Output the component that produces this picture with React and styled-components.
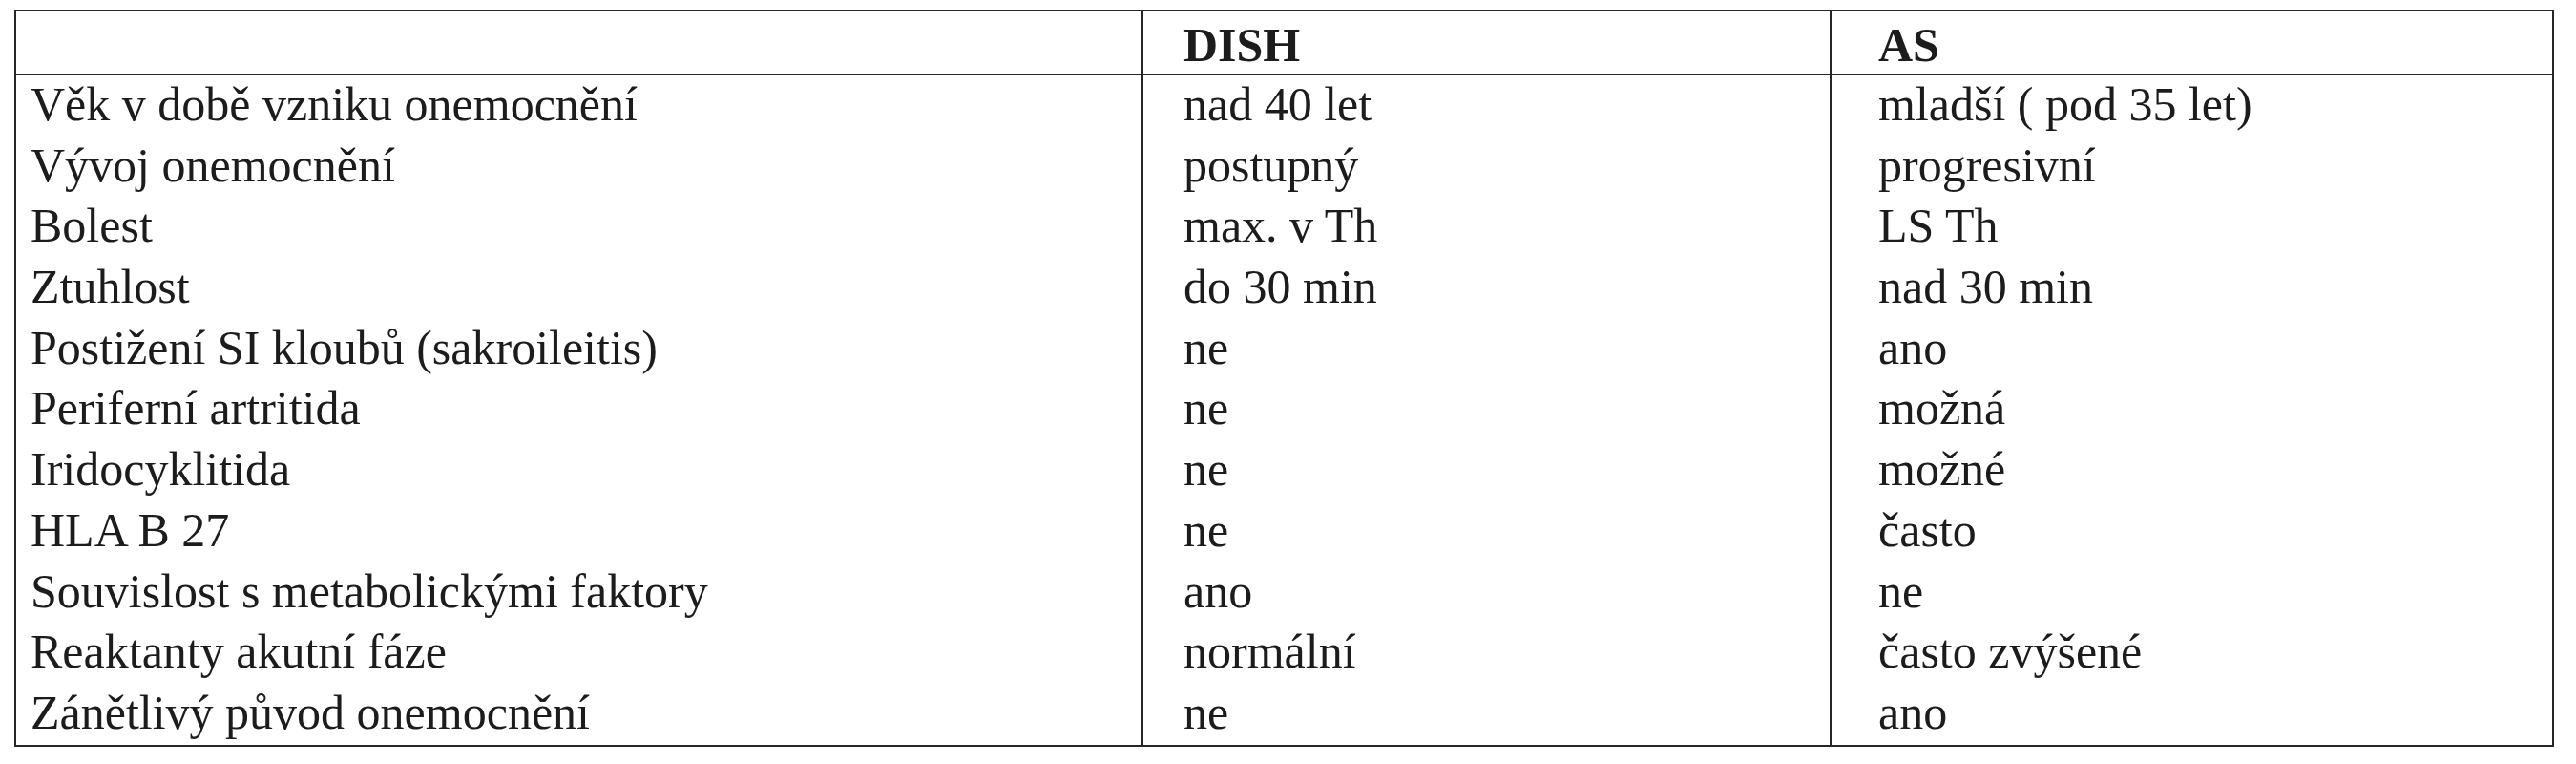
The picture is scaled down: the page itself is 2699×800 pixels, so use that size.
import React from "react";
import styled, { createGlobalStyle } from "styled-components";

const GlobalStyle = createGlobalStyle`
  html, body {
    margin: 0;
    padding: 0;
    background: #ffffff;
  }
  body {
    font-family: "Liberation Serif", "DejaVu Serif", serif;
    color: #1c1c1c;
  }
`;

const Page = styled.div`
  padding: 10px 0 0 15px;
`;

const Table = styled.div`
  width: 2661px;
  border: 2px solid #262626;
  box-sizing: border-box;
  display: flex;
  flex-direction: column;
`;

const Row = styled.div`
  display: grid;
  grid-template-columns: 1179px 721px 1fr;
  height: ${({ header }) => (header ? "67px" : "63.7px")};
  border-bottom: ${({ header }) => (header ? "2px solid #262626" : "none")};
  box-sizing: border-box;
`;

const Cell = styled.div`
  font-size: 50px;
  font-weight: ${({ bold }) => (bold ? 700 : 400)};
  line-height: ${({ bold }) => (bold ? "63px" : "61px")};
  padding-top: ${({ bold }) => (bold ? "4px" : "0")};
  padding-left: ${({ pad }) => pad}px;
  border-left: ${({ first }) => (first ? "none" : "2px solid #262626")};
  white-space: nowrap;
  overflow: hidden;
  box-sizing: border-box;
`;

const rows = [
  ["Věk v době vzniku onemocnění", "nad 40 let", "mladší ( pod 35 let)"],
  ["Vývoj onemocnění", "postupný", "progresivní"],
  ["Bolest", "max. v Th", "LS Th"],
  ["Ztuhlost", "do 30 min", "nad 30 min"],
  ["Postižení SI kloubů (sakroileitis)", "ne", "ano"],
  ["Periferní artritida", "ne", "možná"],
  ["Iridocyklitida", "ne", "možné"],
  ["HLA B 27", "ne", "často"],
  ["Souvislost s metabolickými faktory", "ano", "ne"],
  ["Reaktanty akutní fáze", "normální", "často zvýšené"],
  ["Zánětlivý původ onemocnění", "ne", "ano"],
];

const pads = [15, 42, 49];

export default function App() {
  return (
    <Page>
      <GlobalStyle />
      <Table>
        <Row header>
          <Cell bold first pad={pads[0]} />
          <Cell bold pad={pads[1]}>DISH</Cell>
          <Cell bold pad={pads[2]}>AS</Cell>
        </Row>
        {rows.map((r, i) => (
          <Row key={i}>
            {r.map((t, j) => (
              <Cell key={j} first={j === 0} pad={pads[j]}>
                {t}
              </Cell>
            ))}
          </Row>
        ))}
      </Table>
    </Page>
  );
}
